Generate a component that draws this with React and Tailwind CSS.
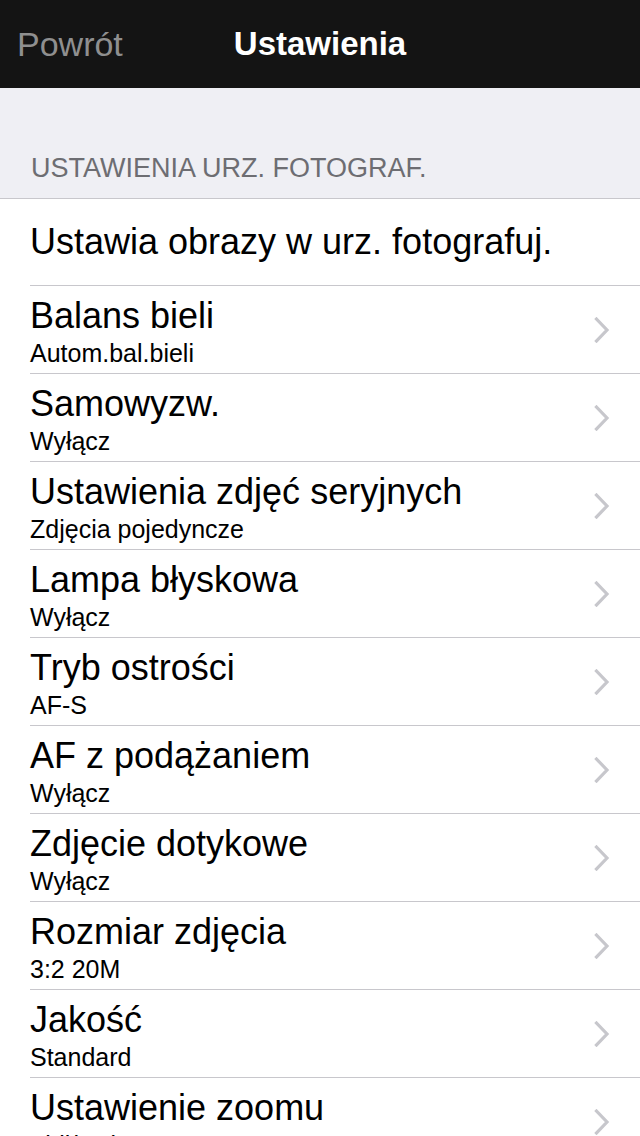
const rows = [
  { title: 'Balans bieli', value: 'Autom.bal.bieli' },
  { title: 'Samowyzw.', value: 'Wyłącz' },
  { title: 'Ustawienia zdjęć seryjnych', value: 'Zdjęcia pojedyncze' },
  { title: 'Lampa błyskowa', value: 'Wyłącz' },
  { title: 'Tryb ostrości', value: 'AF-S' },
  { title: 'AF z podążaniem', value: 'Wyłącz' },
  { title: 'Zdjęcie dotykowe', value: 'Wyłącz' },
  { title: 'Rozmiar zdjęcia', value: '3:2 20M' },
  { title: 'Jakość', value: 'Standard' },
  { title: 'Ustawienie zoomu', value: 'Zbliżenie' },
]

function Chevron() {
  return (
    <svg width="16" height="26" viewBox="0 0 16 26" className="shrink-0">
      <polyline
        points="2.5,2 13,13 2.5,24"
        fill="none"
        stroke="#c7c7cc"
        strokeWidth="3.2"
        strokeLinecap="square"
      />
    </svg>
  )
}

export default function App() {
  return (
    <div
      className="w-[640px] h-[1136px] overflow-hidden bg-[#efeff4]"
      style={{ fontFamily: '"Liberation Sans", Arial, sans-serif' }}
    >
      {/* nav bar */}
      <div className="relative h-[88px] bg-[#141414] flex items-center">
        <span className="pl-[17px] text-[34px] leading-[40px] text-[#8f8f8f]">Powrót</span>
        <span className="absolute left-0 right-0 text-center text-[33px] leading-[40px] font-bold text-white pointer-events-none">
          Ustawienia
        </span>
      </div>

      {/* section header */}
      <div className="pt-[64px] pb-[14px] pl-[31px]">
        <p className="text-[27px] leading-[32px] text-[#6d6d72]">USTAWIENIA URZ. FOTOGRAF.</p>
      </div>

      <div className="bg-white border-t border-[#c8c7cc]">
        <div className="pl-[30px]">
          <div className="h-[87px] border-b border-[#c8c7cc] flex items-center">
            <p className="text-[36px] leading-[40px] text-black">Ustawia obrazy w urz. fotografuj.</p>
          </div>
        </div>

        {rows.map((row) => (
          <div key={row.title} className="pl-[30px]">
            <div className="h-[88px] border-b border-[#c8c7cc] flex items-center pr-[30px]">
              <div className="flex-1 pt-[4px]">
                <p className="text-[36px] leading-[40px] text-black">{row.title}</p>
                <p className="mt-[3px] text-[25px] leading-[28px] text-black">{row.value}</p>
              </div>
              <Chevron />
            </div>
          </div>
        ))}
      </div>
    </div>
  )
}
